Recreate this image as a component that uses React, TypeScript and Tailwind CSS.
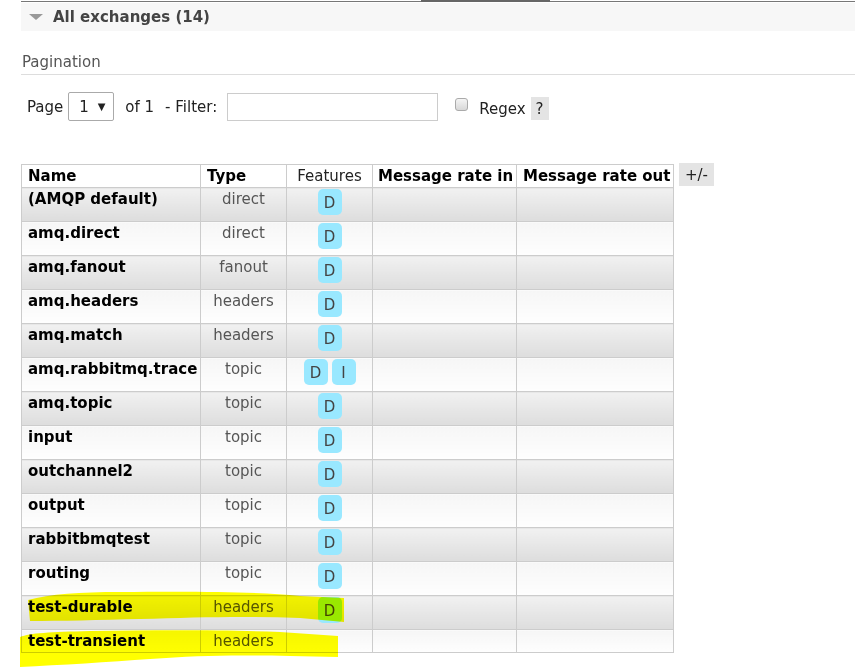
import { Fragment } from "react";

type Exchange = {
    name: string;
    type: string;
    features: string[];
};

const exchanges: Exchange[] = [
    { name: "(AMQP default)", type: "direct", features: ["D"] },
    { name: "amq.direct", type: "direct", features: ["D"] },
    { name: "amq.fanout", type: "fanout", features: ["D"] },
    { name: "amq.headers", type: "headers", features: ["D"] },
    { name: "amq.match", type: "headers", features: ["D"] },
    { name: "amq.rabbitmq.trace", type: "topic", features: ["D", "I"] },
    { name: "amq.topic", type: "topic", features: ["D"] },
    { name: "input", type: "topic", features: ["D"] },
    { name: "outchannel2", type: "topic", features: ["D"] },
    { name: "output", type: "topic", features: ["D"] },
    { name: "rabbitbmqtest", type: "topic", features: ["D"] },
    { name: "routing", type: "topic", features: ["D"] },
    { name: "test-durable", type: "headers", features: ["D"] },
    { name: "test-transient", type: "headers", features: [] },
];

function Badge({ label }: { label: string }) {
    return (
        <span className="inline-flex items-center justify-center h-[26px] min-w-[24px] px-[6px] rounded-[5px] bg-[#99e8ff] text-[#444] text-[15px] leading-none pt-[3px]">
            {label}
        </span>
    );
}

function App() {
    return (
        <div className="relative w-[855px] h-[667px] overflow-hidden bg-white text-[15px] leading-[18px] text-[#222] font-['DejaVu_Sans',Verdana,sans-serif]">
            <div className="ml-[21px]">
                {/* tab strip edge */}
                <div className="relative h-[2px] border-b border-[#777]">
                    <div className="absolute left-[400px] top-0 w-[129px] h-[2px] bg-[#666]" />
                </div>

                <div className="h-[28px] mt-[1px] bg-[#f7f7f7] flex items-center gap-[10px] pl-[8px]">
                    <span className="w-0 h-0 border-l-[7px] border-r-[7px] border-t-[6px] border-l-transparent border-r-transparent border-t-[#999]" />
                    <h2 className="font-bold text-[15px] text-[#444]">All exchanges (14)</h2>
                </div>

                <div className="mt-[22px] pl-[1px] pb-[3px] border-b border-[#dddddd] text-[#555]">Pagination</div>

                <div className="flex items-center mt-[17px] pl-[6px] h-[29px] text-[#222]">
                    <span>Page</span>
                    <div className="ml-[5px] w-[46px] h-[29px] border border-[#aaa] rounded-[2px] flex items-center justify-between pl-[10px] pr-[8px]">
                        <span>1</span>
                        <span className="text-[10px]">▼</span>
                    </div>
                    <span className="ml-[11px]">of 1</span>
                    <span className="ml-[11px]">- Filter:</span>
                    <input type="text" className="ml-[10px] w-[211px] h-[28px] border border-[#ccc] outline-none" />
                    <span className="ml-[17px] w-[13px] h-[13px] rounded-[3px] border border-[#aaa] bg-gradient-to-b from-[#f4f4f4] to-[#d8d8d8] -mt-[4px] shrink-0" />
                    <span className="ml-[11px] mt-[5px]">Regex</span>
                    <span className="ml-[5px] mt-[4px] w-[18px] h-[23px] bg-[#e4e4e4] flex items-center justify-center">?</span>
                </div>

                <div className="flex items-start mt-[43px]">
                    <table className="border-collapse table-fixed w-[652px]">
                        <colgroup>
                            <col className="w-[179px]" />
                            <col className="w-[86px]" />
                            <col className="w-[86px]" />
                            <col className="w-[144px]" />
                            <col className="w-[157px]" />
                        </colgroup>
                        <thead>
                            <tr className="h-[23px]">
                                <th className="border border-[#ccc] text-left font-bold px-[6px] text-black">Name</th>
                                <th className="border border-[#ccc] text-left font-bold px-[6px] text-black">Type</th>
                                <th className="border border-[#ccc] text-center font-normal px-[2px] text-[#222]">Features</th>
                                <th className="border border-[#ccc] text-left font-bold px-[5px] text-black whitespace-nowrap">Message rate in</th>
                                <th className="border border-[#ccc] text-left font-bold px-[6px] text-black whitespace-nowrap">Message rate out</th>
                            </tr>
                        </thead>
                        <tbody>
                            {exchanges.map((ex, i) => {
                                const bg = i % 2 === 0
                                    ? "bg-gradient-to-b from-[#f1f1f1] to-[#dddddd]"
                                    : "bg-gradient-to-b from-[#f6f6f6] to-[#fefefe]";
                                return (
                                    <Fragment key={ex.name}>
                                        <tr className={ex.features.length ? "h-[34px]" : "h-[23px]"}>
                                            <td className={`border border-[#ccc] align-top pt-[2px] px-[6px] font-bold text-black whitespace-nowrap ${bg}`}>{ex.name}</td>
                                            <td className={`border border-[#ccc] align-top pt-[2px] text-center text-[#555] ${bg}`}>{ex.type}</td>
                                            <td className={`border border-[#ccc] align-top pt-[1px] text-center ${bg}`}>
                                                <div className="flex justify-center gap-[4px]">
                                                    {ex.features.map(f => <Badge key={f} label={f} />)}
                                                </div>
                                            </td>
                                            <td className={`border border-[#ccc] ${bg}`} />
                                            <td className={`border border-[#ccc] ${bg}`} />
                                        </tr>
                                    </Fragment>
                                );
                            })}
                        </tbody>
                    </table>
                    <span className="ml-[5px] -mt-[1px] w-[35px] h-[23px] bg-[#e4e4e4] flex items-center justify-center text-[#222]">+/-</span>
                </div>
            </div>

            {/* highlighter marks drawn over the screenshot */}
            <svg className="absolute left-0 top-0 pointer-events-none mix-blend-multiply" width="855" height="667" viewBox="0 0 855 667">
                <path
                    d="M28 600 C50 594 80 592 120 592 C200 591 260 592 300 596 L344 598 L344 622 L300 618 C250 616 200 617 140 619 C100 620 60 621 30 621 Z"
                    fill="#ffff00"
                />
                <path
                    d="M20 637 C30 633 50 632 90 631 C160 630 230 630 280 632 L338 636 L338 657 L290 656 C240 655 200 655 150 659 C110 662 60 665 20 667 Z"
                    fill="#ffff00"
                />
            </svg>
        </div>
    );
}

export default App;
